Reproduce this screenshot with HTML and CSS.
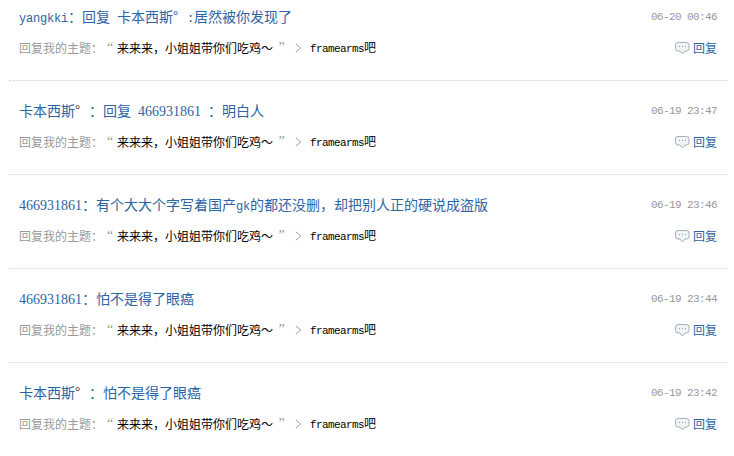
FILE: index.html
```html
<!DOCTYPE html>
<html lang="zh-CN">

<head>
    <meta charset="utf-8">
    <title>回复我的</title>
    <link rel="stylesheet" href="styles.css">
</head>

<body>
    <!-- speech bubble shared by all reply links -->
    <svg class="sprite" width="0" height="0">
        <symbol id="bubble" viewBox="0 0 15 13">
            <path d="M3 .5h8.500q2.500 0 2.500 2.500v3.500q0 2.500-2.500 2.500h-1.500l-2.500 3-2.500-3h-2q-2.500 0-2.500-2.500v-3.500q0-2.500 2.500-2.500z" fill="#eff4f7" stroke="#a3b1bb" />
            <path d="M4 4.500h1M7 4.500h1M10 4.500h1" stroke="#8fa0ac" />
        </symbol>
        <symbol id="arrow" viewBox="0 0 7 10">
            <path d="M.8 .8l5 4.200-5 4.200" fill="none" stroke="#999" />
        </symbol>
    </svg>

    <ul class="feed">
        <li class="item">
            <div class="row title">
                <a class="text"><span class="en">yangkki</span>：回复<i class="sp"></i>卡本西斯<span class="deg">°</span><span class="en"> :</span>居然被你发现了</a>
                <span class="time">06-20 00:46</span>
            </div>
            <div class="row source">
                <span class="label">回复我的主题：</span><span class="quote">“</span>
                <a class="topic">来来来，小姐姐带你们吃鸡～</a><span class="quote end">”</span>
                <svg class="arrow"><use href="#arrow" /></svg>
                <a class="forum"><span class="en">framearms</span>吧</a>
                <a class="reply"><svg class="bubble"><use href="#bubble" /></svg>回复</a>
            </div>
        </li>
        <li class="item">
            <div class="row title">
                <a class="text">卡本西斯<span class="deg dark">°</span><i class="sp"></i>：回复<i class="sp"></i><span class="num">466931861</span><i class="sp"></i>：明白人</a>
                <span class="time">06-19 23:47</span>
            </div>
            <div class="row source">
                <span class="label">回复我的主题：</span><span class="quote">“</span>
                <a class="topic">来来来，小姐姐带你们吃鸡～</a><span class="quote end">”</span>
                <svg class="arrow"><use href="#arrow" /></svg>
                <a class="forum"><span class="en">framearms</span>吧</a>
                <a class="reply"><svg class="bubble"><use href="#bubble" /></svg>回复</a>
            </div>
        </li>
        <li class="item">
            <div class="row title">
                <a class="text"><span class="num">466931861</span>：有个大大个字写着国产<span class="en">gk</span>的都还没删，却把别人正的硬说成盗版</a>
                <span class="time">06-19 23:46</span>
            </div>
            <div class="row source">
                <span class="label">回复我的主题：</span><span class="quote">“</span>
                <a class="topic">来来来，小姐姐带你们吃鸡～</a><span class="quote end">”</span>
                <svg class="arrow"><use href="#arrow" /></svg>
                <a class="forum"><span class="en">framearms</span>吧</a>
                <a class="reply"><svg class="bubble"><use href="#bubble" /></svg>回复</a>
            </div>
        </li>
        <li class="item">
            <div class="row title">
                <a class="text"><span class="num">466931861</span>：怕不是得了眼癌</a>
                <span class="time">06-19 23:44</span>
            </div>
            <div class="row source">
                <span class="label">回复我的主题：</span><span class="quote">“</span>
                <a class="topic">来来来，小姐姐带你们吃鸡～</a><span class="quote end">”</span>
                <svg class="arrow"><use href="#arrow" /></svg>
                <a class="forum"><span class="en">framearms</span>吧</a>
                <a class="reply"><svg class="bubble"><use href="#bubble" /></svg>回复</a>
            </div>
        </li>
        <li class="item">
            <div class="row title">
                <a class="text">卡本西斯<span class="deg dark">°</span><i class="sp"></i>：怕不是得了眼癌</a>
                <span class="time">06-19 23:42</span>
            </div>
            <div class="row source">
                <span class="label">回复我的主题：</span><span class="quote">“</span>
                <a class="topic">来来来，小姐姐带你们吃鸡～</a><span class="quote end">”</span>
                <svg class="arrow"><use href="#arrow" /></svg>
                <a class="forum"><span class="en">framearms</span>吧</a>
                <a class="reply"><svg class="bubble"><use href="#bubble" /></svg>回复</a>
            </div>
        </li>
    </ul>
</body>

</html>
```
FILE: styles.css
```css
body {
    margin: 0;
    background: #fff;
    font-family: "Noto Sans CJK SC", sans-serif;
    font-size: 12px;
    color: #999;
    overflow: hidden;
}

.sprite {
    display: block;
}

.feed {
    list-style: none;
    margin: 0 7px 0 9px;
    padding: 0;
}

.item {
    box-sizing: border-box;
    height: 94px;
    padding: 20px 10px 0;
    border-bottom: 1px dotted #d2d2d2;
}

.item:first-child {
    height: 81px;
    padding-top: 7px;
}

.item:last-child {
    border-bottom: none;
}

.row {
    display: flex;
    align-items: center;
    height: 20px;
    line-height: 20px;
    white-space: nowrap;
}

.title {
    justify-content: space-between;
    font-size: 14px;
    color: #2d64a3;
}

.text {
    height: 22px;
}

.source {
    margin-top: 11px;
}

/* latin letters take half the width of a chinese character */
.en {
    font-family: "Liberation Mono", monospace;
    font-size: 12px;
    letter-spacing: -0.2px;
}

.num {
    font-family: "Liberation Serif", serif;
    font-size: 14px;
}

.sp {
    display: inline-block;
    width: 7px;
}

.deg {
    display: inline-block;
    width: 7px;
    line-height: 14px;
}

.dark {
    color: #444;
}

.time {
    font-family: "Liberation Mono", monospace;
    font-size: 11px;
    letter-spacing: -0.6px;
    color: #999;
}

.quote {
    width: 14px;
    text-align: center;
    font-family: "Liberation Serif", serif;
    font-size: 14px;
}

.end {
    width: 17px;
}

.topic,
.forum {
    color: #000;
}

.arrow {
    width: 7px;
    height: 10px;
    margin: 0 8px 0 5px;
}

.forum .en {
    font-size: 11px;
    letter-spacing: -0.6px;
}

.reply {
    display: flex;
    align-items: center;
    margin-left: auto;
    color: #2d64a3;
}

.bubble {
    width: 15px;
    height: 13px;
    margin-right: 3px;
}
```
